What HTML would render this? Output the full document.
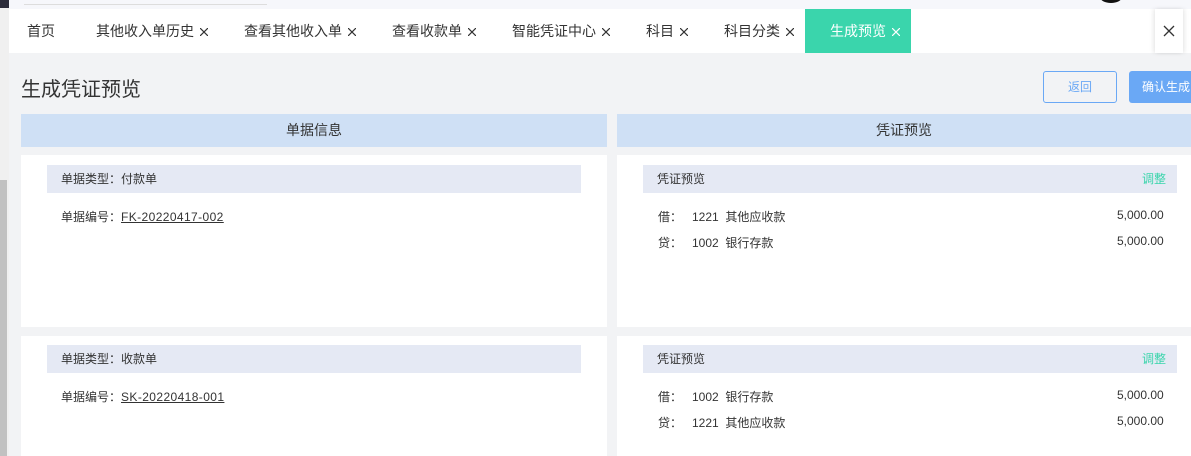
<!DOCTYPE html>
<html><head><meta charset="utf-8"><style>
*{margin:0;padding:0;box-sizing:border-box}
body{width:1191px;height:456px;overflow:hidden;background:#f2f3f5;position:relative;font-family:"Liberation Sans","Noto Sans CJK SC",sans-serif;color:#333}
.a{position:absolute;white-space:nowrap}
.tab{position:absolute;top:9px;height:44px;line-height:44px;font-size:14px;color:#333}
.x{display:inline-block;width:8px;height:8px;margin-left:6px;position:relative;top:0}
.x svg{display:block}
.hd{position:absolute;top:114px;height:33px;line-height:33px;background:#cfe0f5;text-align:center;font-size:14px;color:#333}
.card{position:absolute;background:#fff}
.strip{position:absolute;height:28px;line-height:28px;background:#e5e9f4;font-size:12px;padding-left:14px;color:#333}
.t{font-size:12px;color:#333}
.n{letter-spacing:0.4px}
</style></head><body>
<div class="a" style="left:0;top:0;width:1191px;height:9px;background:#f6f7fb"></div>
<div class="a" style="left:24px;top:4px;width:243px;height:1px;background:#ddd"></div>
<div class="a" style="left:1100px;top:-9px;width:22px;height:12px;border-radius:50%;background:#111"></div>
<div class="a" style="left:0;top:0;width:9px;height:456px;background:#f0f0f0"></div>
<div class="a" style="left:0;top:0;width:9px;height:8px;background:#2c2c3a"></div>
<div class="a" style="left:0;top:180px;width:7px;height:276px;background:#c1c1c1"></div>
<div class="a" style="left:9px;top:9px;width:1182px;height:44px;background:#fff"></div>
<div class="tab" style="left:27px">首页</div>
<div class="tab" style="left:96px">其他收入单历史<span class="x"><svg width="8" height="8"><path d="M0 0L8 8M8 0L0 8" stroke="#333" stroke-width="1.2"/></svg></span></div>
<div class="tab" style="left:244px">查看其他收入单<span class="x"><svg width="8" height="8"><path d="M0 0L8 8M8 0L0 8" stroke="#333" stroke-width="1.2"/></svg></span></div>
<div class="tab" style="left:392px">查看收款单<span class="x"><svg width="8" height="8"><path d="M0 0L8 8M8 0L0 8" stroke="#333" stroke-width="1.2"/></svg></span></div>
<div class="tab" style="left:512px">智能凭证中心<span class="x"><svg width="8" height="8"><path d="M0 0L8 8M8 0L0 8" stroke="#333" stroke-width="1.2"/></svg></span></div>
<div class="tab" style="left:646px">科目<span class="x"><svg width="8" height="8"><path d="M0 0L8 8M8 0L0 8" stroke="#333" stroke-width="1.2"/></svg></span></div>
<div class="tab" style="left:724px">科目分类<span class="x"><svg width="8" height="8"><path d="M0 0L8 8M8 0L0 8" stroke="#333" stroke-width="1.2"/></svg></span></div>
<div class="tab" style="left:805px;width:106px;background:#3ad5ac;color:#fff;padding-left:25px">生成预览<span class="x"><svg width="8" height="8"><path d="M0 0L8 8M8 0L0 8" stroke="#fff" stroke-width="1.2"/></svg></span></div>
<div class="a" style="left:1155px;top:9px;width:28px;height:44px;background:#fff;box-shadow:-2px 0 4px rgba(0,0,0,.08),2px 0 4px rgba(0,0,0,.08)"><svg width="28" height="44"><path d="M9 26L19 36M19 26L9 36" transform="translate(0,-9)" stroke="#333" stroke-width="1.3"/></svg></div>
<div class="a" style="left:21px;top:73px;font-size:20px;color:#333">生成凭证预览</div>
<div class="a" style="left:1043px;top:71px;width:74px;height:32px;border:1px solid #6aa8f5;border-radius:3px;text-align:center;line-height:30px;font-size:12px;color:#6aa8f5;background:#f2f3f5">返回</div>
<div class="a" style="left:1129px;top:71px;width:80px;height:32px;border-radius:3px;background:#6aa8f5;color:#fff;font-size:12px;line-height:32px;padding-left:13px">确认生成</div>
<div class="hd" style="left:21px;width:586px">单据信息</div>
<div class="hd" style="left:617px;width:574px">凭证预览</div>
<div class="card" style="left:21px;top:155px;width:586px;height:172px"></div>
<div class="card" style="left:617px;top:155px;width:574px;height:172px"></div>
<div class="card" style="left:21px;top:336px;width:586px;height:120px"></div>
<div class="card" style="left:617px;top:336px;width:574px;height:120px"></div>
<div class="strip" style="left:47px;top:165px;width:534px">单据类型：付款单</div>
<div class="a t" style="left:61px;top:208px">单据编号：<u class="n">FK-20220417-002</u></div>
<div class="strip" style="left:643px;top:165px;width:534px">凭证预览<span style="position:absolute;right:11px;color:#3ad5ac">调整</span></div>
<div class="a t" style="left:658px;top:208px">借：&nbsp;&nbsp;&nbsp;1221&nbsp;&nbsp;其他应收款</div>
<div class="a t" style="left:1117px;top:208px">5,000.00</div>
<div class="a t" style="left:658px;top:234px">贷：&nbsp;&nbsp;&nbsp;1002&nbsp;&nbsp;银行存款</div>
<div class="a t" style="left:1117px;top:234px">5,000.00</div>
<div class="strip" style="left:47px;top:345px;width:534px">单据类型：收款单</div>
<div class="a t" style="left:61px;top:388px">单据编号：<u class="n">SK-20220418-001</u></div>
<div class="strip" style="left:643px;top:345px;width:534px">凭证预览<span style="position:absolute;right:11px;color:#3ad5ac">调整</span></div>
<div class="a t" style="left:658px;top:388px">借：&nbsp;&nbsp;&nbsp;1002&nbsp;&nbsp;银行存款</div>
<div class="a t" style="left:1117px;top:388px">5,000.00</div>
<div class="a t" style="left:658px;top:414px">贷：&nbsp;&nbsp;&nbsp;1221&nbsp;&nbsp;其他应收款</div>
<div class="a t" style="left:1117px;top:414px">5,000.00</div>
</body></html>
